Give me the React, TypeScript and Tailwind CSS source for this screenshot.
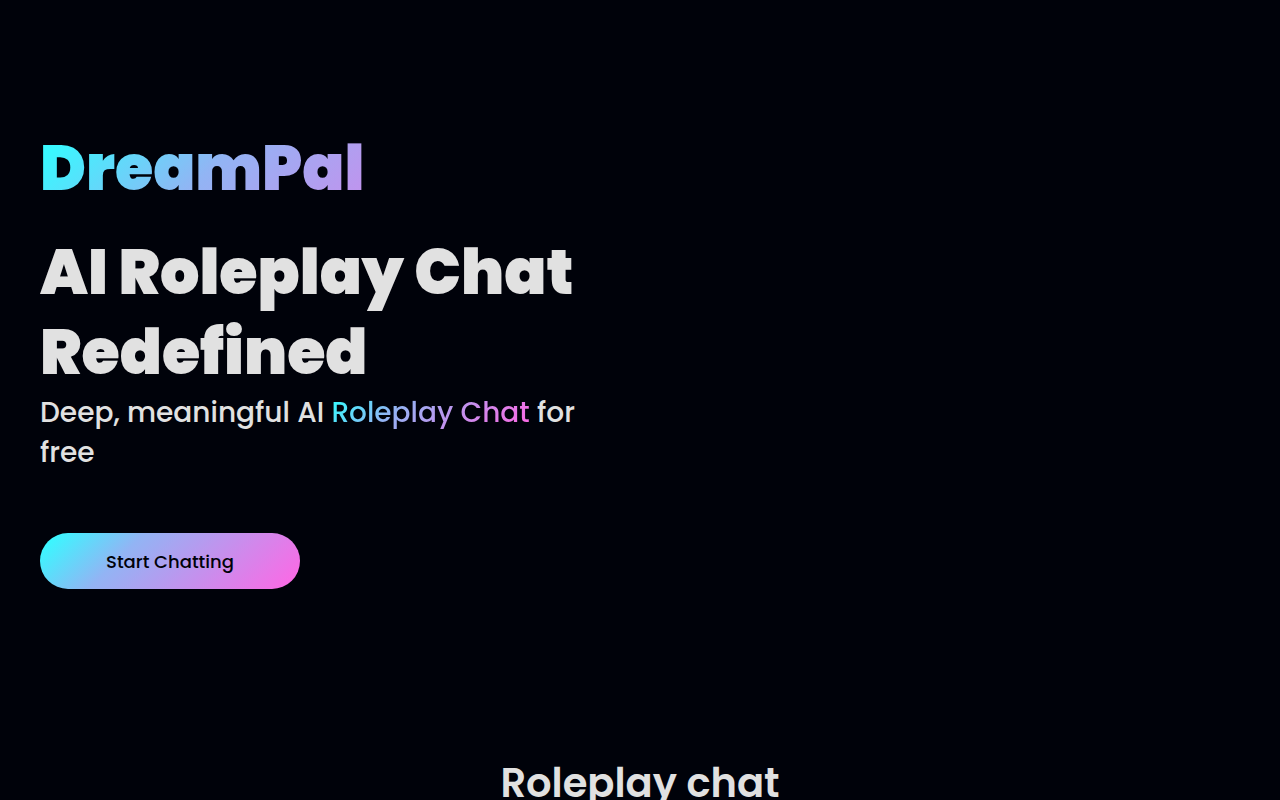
const gradient =
  "bg-[linear-gradient(135deg,#39f8ff_5%,#92b4f4_33%,#fe68e5_98%)]";

const gradientText = `${gradient} bg-clip-text text-transparent`;

export default function App() {
  return (
    <div className="min-h-screen bg-[#00020a] font-['Poppins','Inter',sans-serif] text-[#e1e1e1]">

      {/* HERO */}
      <section className="grid grid-cols-2 px-10 pt-[129px]">
        <div className="pr-10">
          <p className={`mb-6 text-[62px] leading-[80px] font-black ${gradientText}`}>
            DreamPal
          </p>

          <h1 className="text-[62px] leading-[80px] font-black">
            AI Roleplay Chat Redefined
          </h1>

          <p className="text-[28px] leading-10 font-medium">
            Deep, meaningful AI <span className={gradientText}>Roleplay Chat</span> for free
          </p>

          <button
            type="button"
            className={`mt-15 h-14 w-65 rounded-full pt-0.5 text-lg font-medium text-[#00020a] ${gradient}`}
          >
            Start Chatting
          </button>
        </div>
      </section>

      {/* FEATURES */}
      <section className="px-10 pt-41">
        <h2 className="text-center text-[40px] leading-[60px] font-semibold">
          Roleplay chat
        </h2>
      </section>

    </div>
  );
}
